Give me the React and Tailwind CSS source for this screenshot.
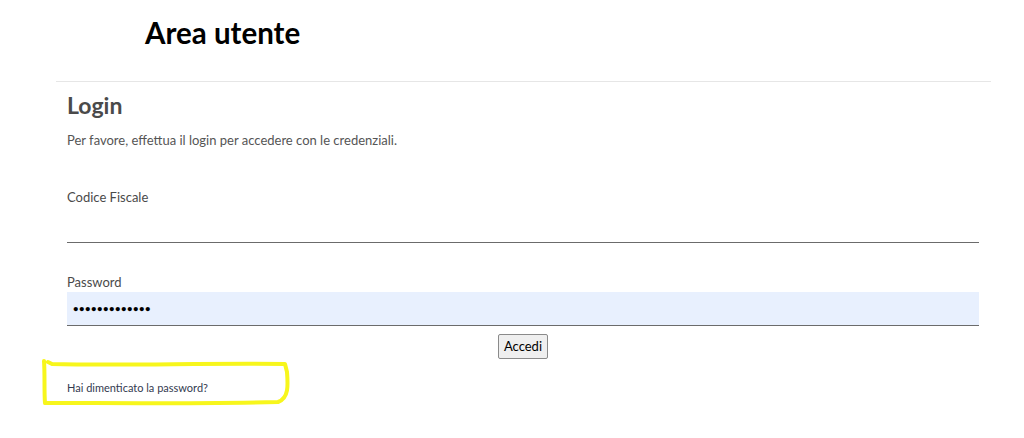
export default function App() {
  return (
    <div className="relative w-full h-[438px] bg-white overflow-hidden font-['Lato','Noto_Sans',sans-serif]">
      <h1 className="pl-[145px] pt-[14px] h-[81px] text-[29.5px] font-bold text-black leading-[38px]">
        Area utente
      </h1>

      <div className="ml-[56px] mr-[33px] border-t border-[#e6e6e6] pl-[11px] pr-[12px]">
        <h2 className="pt-[9px] text-[23px] font-bold text-[#4a4a4a] leading-[28px]">Login</h2>
        <p className="mt-[13px] text-[13px] text-[#555] leading-[16px]">
          Per favore, effettua il login per accedere con le credenziali.
        </p>

        <form className="mt-[40px]" onSubmit={(e) => e.preventDefault()}>
          <label className="block text-[13px] text-[#4a4a4a] leading-[18px]">Codice Fiscale</label>
          <input
            type="text"
            className="block w-full h-[37px] bg-white border-b border-[#6b6b6b] outline-none"
          />

          <label className="block mt-[30px] text-[13px] text-[#4a4a4a] leading-[18px]">Password</label>
          <input
            type="password"
            readOnly
            defaultValue="passwordpassw"
            className="block w-full h-[34px] mt-[1px] px-[6px] bg-[#e8f0fe] border-b border-[#6b6b6b] text-[9.5px] font-bold text-black outline-none tracking-[0.5px]"
          />

          <div className="flex justify-center mt-[8px]">
            <button
              type="submit"
              className="h-[25px] px-[5px] bg-[#efefef] border border-[#8a8a8a] rounded-[2px] text-[13px] text-black leading-none"
            >
              Accedi
            </button>
          </div>
        </form>

        <a href="#" className="block mt-[20px] text-[11px] text-[#333a50] leading-[18px]">
          Hai dimenticato la password?
        </a>
      </div>

      {/* yellow marker annotation */}
      <svg className="absolute left-0 top-0 pointer-events-none" width="1024" height="438">
        <path
          d="M44 361 C45 375 44 390 45 403 C110 403 190 404 278 402 C289 398 288 385 287 372 L285 364 C200 363 120 366 52 364 L48 362"
          fill="none"
          stroke="#f7f61c"
          strokeWidth="4"
          strokeLinecap="round"
          strokeLinejoin="round"
        />
      </svg>
    </div>
  );
}
